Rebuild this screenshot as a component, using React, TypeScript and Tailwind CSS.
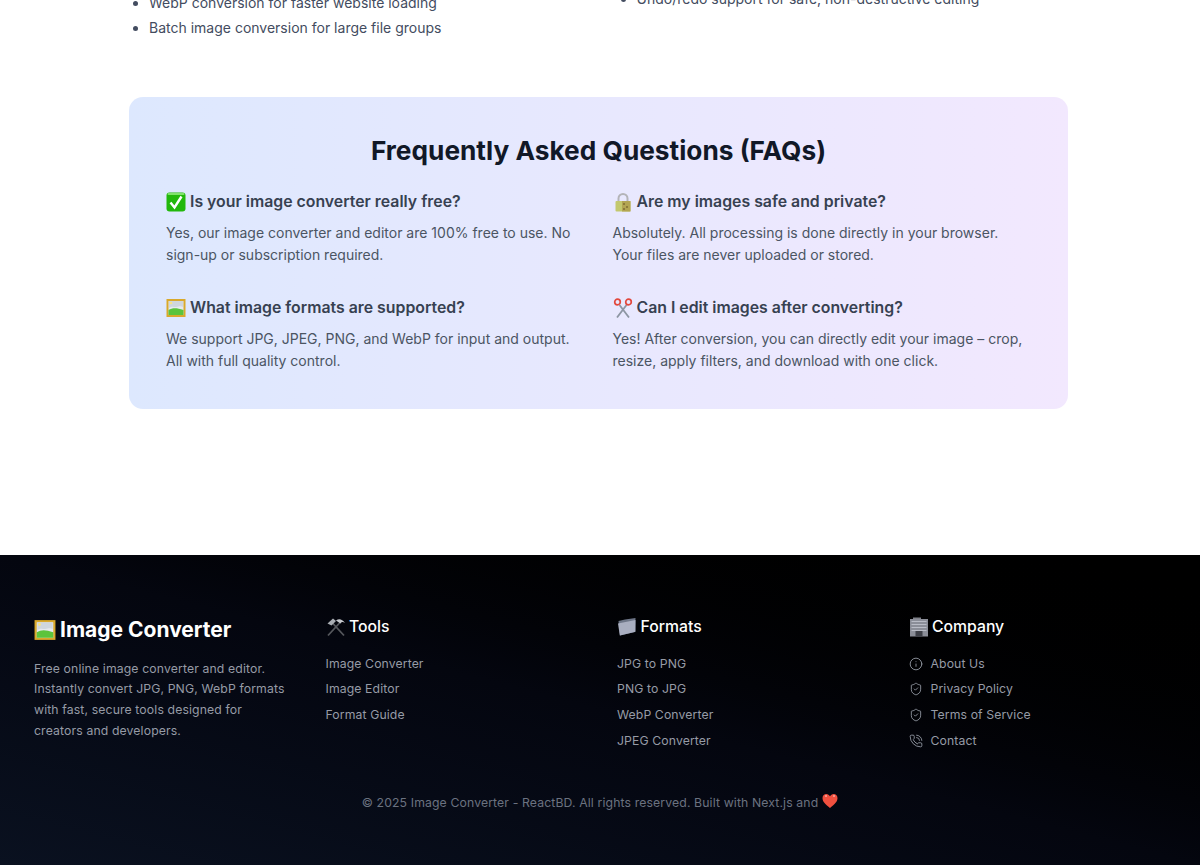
import React from "react";
import { Info, ShieldCheck, PhoneCall } from "lucide-react";

// the reference uses a different emoji set, so these are drawn by hand
const CheckEmoji = () => (
  <svg viewBox="0 0 20 20" className="h-5 w-5 shrink-0">
    <rect x="0.5" y="0.5" width="19" height="19" rx="3" fill="#22b80c" />
    <rect x="1.5" y="1" width="17" height="2" rx="1" fill="#7fe36a" />
    <path d="M4.5 10.5 L8.5 15.5 L15.5 4.5" fill="none" stroke="#fff" strokeWidth="2.4" />
  </svg>
);

const LockEmoji = () => (
  <svg viewBox="0 0 20 20" className="h-5 w-5 shrink-0">
    <path d="M5.5 10 V6.5 a4.5 4.5 0 0 1 9 0 V10" fill="none" stroke="#b4b4b8" strokeWidth="2" />
    <rect x="2.5" y="9" width="15" height="10.5" rx="1" fill="#c3c86e" />
    <rect x="9" y="9" width="8.5" height="10.5" fill="#b3a552" />
    <rect x="10" y="11" width="2" height="2" fill="#8c7a3a" />
    <rect x="13" y="14" width="2" height="2" fill="#8c7a3a" />
    <rect x="10" y="16" width="2" height="2" fill="#8c7a3a" />
  </svg>
);

const PictureEmoji = ({ className }: { className: string }) => (
  <svg viewBox="0 0 20 20" className={className}>
    <rect x="0.5" y="1" width="19" height="18" fill="#d9a92b" />
    <rect x="2.5" y="3" width="15" height="14" fill="#e6e9ee" />
    <path d="M3 3h14v6c-3-1.500-4 0-7 0s-4-1-7 1z" fill="#cfd6dd" />
    <circle cx="5" cy="5" r="1.300" fill="#f6e48a" />
    <path d="M2.500 12c4-2.500 8-2.500 15 0v5h-15z" fill="#5bc43c" />
  </svg>
);

const ScissorsEmoji = () => (
  <svg viewBox="0 0 20 20" className="h-5 w-5 shrink-0">
    <path d="M6.500 7 L16 19.500 M13.500 7 L4 19.500" stroke="#8d96a3" strokeWidth="1.800" fill="none" />
    <circle cx="4.500" cy="4" r="2.800" fill="none" stroke="#e2483d" strokeWidth="1.700" />
    <circle cx="15.500" cy="4" r="2.800" fill="none" stroke="#e2483d" strokeWidth="1.700" />
  </svg>
);

const HammerEmoji = () => (
  <svg viewBox="0 0 20 20" className="h-5 w-5 shrink-0">
    <path d="M5.500 5 L18 18.500 M14.500 5 L2 18.500" stroke="#55575c" strokeWidth="1.800" fill="none" />
    <path d="M1.500 6.500 L7 1.500 L10 4 L5.500 8.500z" fill="#a9adb3" />
    <path d="M10 3.500 C13 1.500 16 2 19 6 C16.500 4.500 15.500 5 14.500 6.500z" fill="#c4c7cc" />
  </svg>
);

const FolderEmoji = () => (
  <svg viewBox="0 0 20 20" className="h-5 w-5 shrink-0">
    <path d="M1.500 4 L8 2.500 L18.500 1 L18 15 L3 18.500z" fill="#6e7688" />
    <path d="M1 6.500 L18.500 3 L18.500 14.800 L2.800 18.500z" fill="#a9aec0" />
  </svg>
);

const BuildingEmoji = () => (
  <svg viewBox="0 0 20 20" className="h-5 w-5 shrink-0">
    <rect x="4" y="0.500" width="8" height="3" fill="#7f8189" />
    <rect x="1" y="2" width="18" height="17.500" fill="#8b8e98" />
    <path d="M2.500 4.500h15M2.500 7.500h15M2.500 10.500h15M2.500 13.500h15" stroke="#b9bcc6" strokeWidth="1.200" />
    <rect x="6.500" y="14" width="7" height="5.500" fill="#3e4048" />
  </svg>
);

const HeartEmoji = () => (
  <svg viewBox="0 0 16 16" className="ml-[4px] inline h-4 w-4 align-[-2px]">
    <path d="M8 15 C3 11 0.500 8.500 0.500 5 C0.500 2.500 2.500 1 4.300 1 C6 1 7.300 2 8 3.300 C8.700 2 10 1 11.700 1 C13.500 1 15.500 2.500 15.500 5 C15.500 8.500 13 11 8 15z" fill="#f0503f" />
    <path d="M3 3 h2 M11 3 h2" stroke="#fbd5cf" strokeWidth="1.200" />
  </svg>
);

const faqs = [
  { icon: <CheckEmoji />, q: "Is your image converter really free?", a: "Yes, our image converter and editor are 100% free to use. No sign-up or subscription required." },
  { icon: <LockEmoji />, q: "Are my images safe and private?", a: "Absolutely. All processing is done directly in your browser. Your files are never uploaded or stored." },
  { icon: <PictureEmoji className="h-5 w-5 shrink-0" />, q: "What image formats are supported?", a: "We support JPG, JPEG, PNG, and WebP for input and output. All with full quality control." },
  { icon: <ScissorsEmoji />, q: "Can I edit images after converting?", a: "Yes! After conversion, you can directly edit your image – crop, resize, apply filters, and download with one click." },
];

const App: React.FC = () => {
  return (
    <div className="h-[865px] overflow-hidden bg-white font-['Inter',sans-serif]">
      <div className="ml-[129px] -mt-[8px] grid w-[939px] grid-cols-2 gap-x-[28px] text-[14px] leading-[21px] text-[#434c60]">
        <ul className="list-disc space-y-[3.500px] pl-[20px]">
          <li>WebP conversion for faster website loading</li>
          <li>Batch image conversion for large file groups</li>
        </ul>
        <ul className="-mt-[4.500px] list-disc pl-[24px]">
          <li>Undo/redo support for safe, non-destructive editing</li>
        </ul>
      </div>

      <section className="mt-[59px] ml-[129px] h-[312px] w-[939px] rounded-[14px] bg-gradient-to-r from-[#dde8fe] to-[#f2e8fe] px-[37px] pt-[38px]">
        <h2 className="text-center text-[26.250px] leading-[32px] font-bold text-[#111827]">Frequently Asked Questions (FAQs)</h2>
        <div className="mt-[23px] grid grid-cols-2 gap-x-[28px] gap-y-[30px]">
          {faqs.map((f) => (
            <div key={f.q}>
              <h3 className="flex items-center gap-[4px] text-[15.850px] leading-[24px] font-semibold text-[#374151]">
                {f.icon}
                {f.q}
              </h3>
              <p className="mt-[8px] text-[14px] leading-[22px] text-[#4b5563]">{f.a}</p>
            </div>
          ))}
        </div>
      </section>

      <footer className="mt-[146px] h-[310px] bg-gradient-to-tr from-[#0a1120] via-[#04060f] to-black px-[34px] pt-[60px] text-[#969ba6]">
        <div className="grid grid-cols-4 gap-x-[34px]">
          <div>
            <h2 className="flex items-center gap-[4px] text-[21px] leading-[30px] font-bold text-white">
              <PictureEmoji className="h-[22px] w-[22px] shrink-0" />
              Image Converter
            </h2>
            <p className="mt-[14px] text-[12.250px] leading-[20.700px] tracking-[0.120px]">
              Free online image converter and editor. Instantly convert JPG, PNG, WebP formats with fast, secure tools designed for creators and developers.
            </p>
          </div>
          <div>
            <h3 className="flex items-center gap-[3.500px] text-[15.750px] leading-6 font-medium text-white">
              <HammerEmoji />
              Tools
            </h3>
            <ul className="mt-[16px] space-y-[7.800px] text-[12.250px] leading-[18px] tracking-[0.100px]">
              <li>Image Converter</li>
              <li>Image Editor</li>
              <li>Format Guide</li>
            </ul>
          </div>
          <div>
            <h3 className="flex items-center gap-[3.500px] text-[15.750px] leading-6 font-medium text-white">
              <FolderEmoji />
              Formats
            </h3>
            <ul className="mt-[16px] space-y-[7.800px] text-[12.250px] leading-[18px] tracking-[0.100px]">
              <li>JPG to PNG</li>
              <li>PNG to JPG</li>
              <li>WebP Converter</li>
              <li>JPEG Converter</li>
            </ul>
          </div>
          <div>
            <h3 className="flex items-center gap-[3.500px] text-[15.750px] leading-6 font-medium text-white">
              <BuildingEmoji />
              Company
            </h3>
            <ul className="mt-[16px] space-y-[7.800px] text-[12.250px] leading-[18px] tracking-[0.100px]">
              <li className="flex items-center gap-[8px]"><Info size={14} strokeWidth={1.500} />About Us</li>
              <li className="flex items-center gap-[8px]"><ShieldCheck size={14} strokeWidth={1.500} />Privacy Policy</li>
              <li className="flex items-center gap-[8px]"><ShieldCheck size={14} strokeWidth={1.500} />Terms of Service</li>
              <li className="flex items-center gap-[8px]"><PhoneCall size={14} strokeWidth={1.500} />Contact</li>
            </ul>
          </div>
        </div>
        <p className="mt-[43px] text-center text-[12.250px] leading-5 tracking-[0.120px] text-[#6b7280]">
          © 2025 Image Converter - ReactBD. All rights reserved. Built with Next.js and
          <HeartEmoji />
        </p>
      </footer>
    </div>
  );
};

export default App;
